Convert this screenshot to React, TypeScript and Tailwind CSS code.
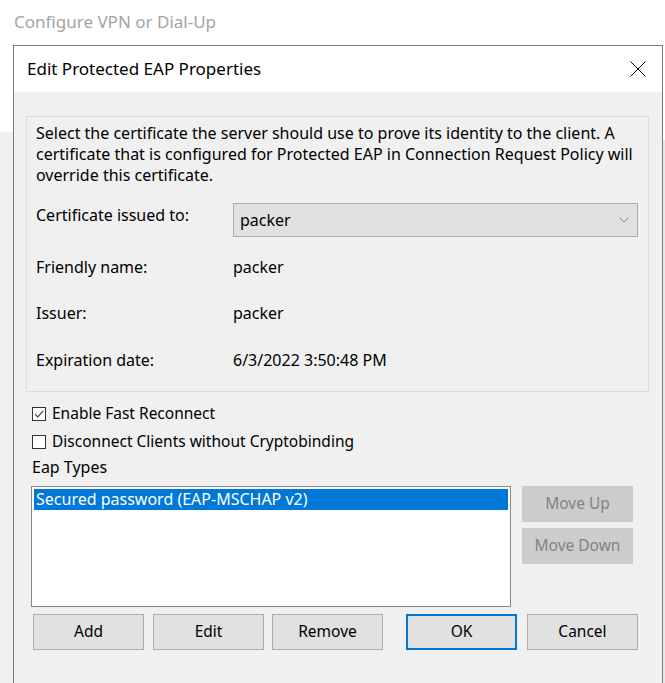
import React from 'react';

const font = "font-['Noto_Sans',sans-serif]";

const Btn = ({ label, primary, disabled, className = '' }: { label: string; primary?: boolean; disabled?: boolean; className?: string }) => (
  <div
    className={`h-[36px] flex items-center justify-center border text-[15.5px] ${
      disabled
        ? 'bg-[#cccccc] border-[#cccccc] text-[#838383]'
        : primary
        ? 'bg-[#e1e1e1] border-[#0078d7] border-2 text-black'
        : 'bg-[#e1e1e1] border-[#adadad] text-black'
    } ${className}`}
  >
    {label}
  </div>
);

const Check = ({ checked, label }: { checked?: boolean; label: string }) => (
  <div className="flex items-center h-[28px]">
    <div className="w-[14px] h-[14px] border border-[#333333] bg-white flex items-center justify-center">
      {checked && (
        <svg width="12" height="12" viewBox="0 0 12 12">
          <path d="M2 6.2 L4.7 9 L10.2 2.8" fill="none" stroke="#333" strokeWidth="1.1" />
        </svg>
      )}
    </div>
    <span className="ml-[6px] text-[15.5px] text-black">{label}</span>
  </div>
);

export default function App() {
  return (
    <div className={`w-[665px] h-[683px] bg-white overflow-hidden flex flex-col ${font}`}>
      {/* background wizard title */}
      <div className="h-[45px] pl-[14px] pt-[10px] text-[17px] text-[#a3a3a3] leading-[24px]">
        Configure VPN or Dial-Up
      </div>
      <div className="flex flex-1 min-h-0">
        <div className="w-[13px] flex flex-col">
          <div className="h-[87px] bg-white" />
          <div className="flex-1 bg-[#f0f0f0]" />
        </div>
        {/* dialog */}
        <div className="w-[650px] border-l border-r border-t border-[#7a7a7a] flex flex-col">
          <div className="h-[46px] bg-white flex items-center justify-between pl-[13px] pr-[16px]">
            <span className="text-[17px] text-black">Edit Protected EAP Properties</span>
            <svg width="16" height="16" viewBox="0 0 16 16">
              <path d="M0.5 0.5 L15.5 15.5 M15.5 0.5 L0.5 15.5" stroke="#000" strokeWidth="1" />
            </svg>
          </div>
          <div className="flex-1 bg-[#f0f0f0] px-[12px] pt-[24px]">
            {/* group box */}
            <div className="w-[623px] h-[276px] border border-[#dcdcdc] pl-[9px] pt-[6px] text-[16px] text-black">
              <p className="leading-[21px] whitespace-nowrap">
                Select the certificate the server should use to prove its identity to the client. A
                <br />
                certificate that is configured for Protected EAP in Connection Request Policy will
                <br />
                override this certificate.
              </p>
              <div className="grid grid-cols-[197px_405px] mt-[17px]">
                <div className="pt-[2px] leading-[21px]">Certificate issued to:</div>
                <div className="h-[34px] bg-[#e1e1e1] border border-[#adadad] flex items-center justify-between pl-[6px] pr-[8px]">
                  <span>packer</span>
                  <svg width="10" height="6" viewBox="0 0 10 6">
                    <path d="M0.5 0.5 L5 5 L9.5 0.5" fill="none" stroke="#888" strokeWidth="1" />
                  </svg>
                </div>
                <div className="mt-[20px] leading-[21px]">Friendly name:</div>
                <div className="mt-[20px] leading-[21px]">packer</div>
                <div className="mt-[25px] leading-[21px]">Issuer:</div>
                <div className="mt-[25px] leading-[21px]">packer</div>
                <div className="mt-[26px] leading-[21px]">Expiration date:</div>
                <div className="mt-[26px] leading-[21px]">6/3/2022 3:50:48 PM</div>
              </div>
            </div>
            <div className="pl-[6px] mt-[8px]">
              <Check checked label="Enable Fast Reconnect" />
              <Check label="Disconnect Clients without Cryptobinding" />
              <div className="text-[16px] text-black leading-[24px] mt-[-1px]">Eap Types</div>
            </div>
            <div className="flex mt-[7px]">
              <div className="ml-[5px] w-[480px] h-[121px] bg-white border border-[#828790] p-[2px]">
                <div className="h-[21px] bg-[#0078d7] text-white text-[16px] leading-[21px] pl-[2px]">
                  Secured password (EAP-MSCHAP v2)
                </div>
              </div>
              <div className="ml-[11px] flex flex-col gap-[6px]">
                <Btn label="Move Up" disabled className="w-[111px]" />
                <Btn label="Move Down" disabled className="w-[111px]" />
              </div>
            </div>
            <div className="flex mt-[7px] ml-[7px]">
              <Btn label="Add" className="w-[111px]" />
              <Btn label="Edit" className="w-[111px] ml-[9px]" />
              <Btn label="Remove" className="w-[111px] ml-[8px]" />
              <Btn label="OK" primary className="w-[111px] ml-[23px]" />
              <Btn label="Cancel" className="w-[111px] ml-[10px]" />
            </div>
          </div>
        </div>
        <div className="w-[2px] flex flex-col">
          <div className="h-[95px] bg-white" />
          <div className="flex-1 bg-[#e8e8e8]" />
        </div>
      </div>
    </div>
  );
}
